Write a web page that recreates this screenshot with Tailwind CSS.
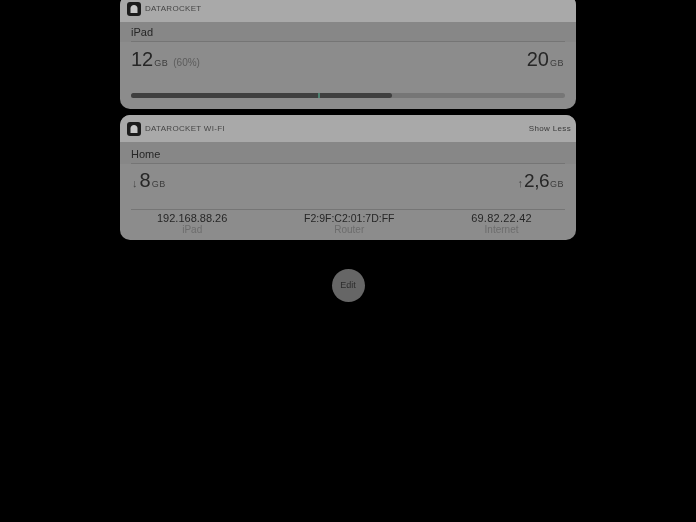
<!DOCTYPE html>
<html lang="en">
<head>
    <meta charset="UTF-8">
    <meta name="viewport" content="width=device-width, initial-scale=1.0">
    <title>DataRocket widgets</title>
    <script src="https://cdn.jsdelivr.net/npm/@tailwindcss/browser@4"></script>
</head>
<body class="bg-black h-[522px] w-[696px] overflow-hidden font-['Liberation_Sans',sans-serif]">
    <div class="flex flex-col items-center">
        <!-- usage widget -->
        <div class="w-[456px] h-[114px] mt-[-5px] rounded-[10px] overflow-hidden bg-[#8c8c8c] flex flex-col">
            <div class="h-[27px] shrink-0 bg-[#a9a9a9] flex items-center pl-[7px] gap-[4px]">
                <svg width="14" height="14" viewBox="0 0 14 14" class="blur-[0.4px]">
                    <rect width="14" height="14" rx="3" fill="#1c1c1c"/>
                    <path d="M3.500 11V6.500C3.500 4.400 5 3 7 3s3.500 1.400 3.500 3.500V11Z" fill="#c8c8c8"/>
                </svg>
                <span class="text-[8px] tracking-[0.3px] text-[#454545] blur-[0.4px]">DATAROCKET</span>
            </div>
            <div class="bg-[#878787] h-[20px] shrink-0 px-[11px]">
                <div class="h-full flex items-end pb-[1px] border-b border-[#757575] text-[11px] text-[#262626] blur-[0.4px]">iPad</div>
            </div>
            <div class="ml-[11px] mr-[12px] mt-[6px] flex justify-between items-baseline text-[#262626] blur-[0.5px]">
                <div class="flex items-baseline">
                    <span class="text-[20px] leading-[23px]">12</span>
                    <span class="text-[9px] tracking-[0.5px] ml-[1px] text-[#3c3c3c]">GB</span>
                    <span class="text-[10px] text-[#5c5c5c] ml-[5px]">(60%)</span>
                </div>
                <div class="flex items-baseline">
                    <span class="text-[20px] leading-[23px]">20</span>
                    <span class="text-[9px] tracking-[0.5px] ml-[1px] text-[#3c3c3c]">GB</span>
                </div>
            </div>
            <div class="relative mx-[11px] mt-[22px] h-[5px] rounded-full bg-[#767676] blur-[0.4px]">
                <div class="h-full w-[261px] rounded-full bg-[#3f3f3f]"></div>
                <div class="absolute left-[187px] top-0 h-full w-[2px] bg-[#4f8070]"></div>
            </div>
        </div>

        <!-- wi-fi widget -->
        <div class="w-[456px] h-[125px] mt-[6px] rounded-[10px] overflow-hidden bg-[#8c8c8c] flex flex-col">
            <div class="h-[27px] shrink-0 bg-[#a9a9a9] flex items-center justify-between pl-[7px] pr-[5px]">
                <div class="flex items-center gap-[4px]">
                    <svg width="14" height="14" viewBox="0 0 14 14" class="blur-[0.4px]">
                        <rect width="14" height="14" rx="3" fill="#1c1c1c"/>
                        <path d="M3.500 11V6.500C3.500 4.400 5 3 7 3s3.500 1.400 3.500 3.500V11Z" fill="#c8c8c8"/>
                    </svg>
                    <span class="text-[8px] tracking-[0.3px] text-[#454545] blur-[0.4px]">DATAROCKET WI-FI</span>
                </div>
                <span class="text-[8px] tracking-[0.35px] text-[#3a3a3a] blur-[0.4px]">Show Less</span>
            </div>
            <div class="bg-[#878787] h-[22px] shrink-0 px-[11px]">
                <div class="h-full flex items-end pb-[1px] border-b border-[#757575] text-[11px] text-[#262626] blur-[0.4px]">Home</div>
            </div>
            <div class="ml-[11px] mr-[12px] mt-[5px] flex justify-between items-baseline text-[#262626] blur-[0.5px]">
                <div class="flex items-baseline">
                    <span class="text-[11px] text-[#454545] ml-[1px] mr-[2px]">↓</span>
                    <span class="text-[20px] leading-[23px]">8</span>
                    <span class="text-[9px] tracking-[0.5px] ml-[1px] text-[#3c3c3c]">GB</span>
                </div>
                <div class="flex items-baseline">
                    <span class="text-[11px] text-[#454545] mr-[1px]">↑</span>
                    <span class="text-[19px] leading-[23px] tracking-[-0.5px]">2,6</span>
                    <span class="text-[9px] tracking-[0.5px] ml-[1px] text-[#3c3c3c]">GB</span>
                </div>
            </div>
            <div class="mx-[11px] mt-[17px] border-t border-[#757575] flex justify-between pl-[26px] pr-[33px] pt-[2px] text-center blur-[0.5px]">
                <div class="flex flex-col">
                    <span class="text-[11px] leading-[12px] text-[#262626]">192.168.88.26</span>
                    <span class="text-[10px] leading-[11px] text-[#6c6c6c]">iPad</span>
                </div>
                <div class="flex flex-col">
                    <span class="text-[10.5px] leading-[12px] text-[#262626]">F2:9F:C2:01:7D:FF</span>
                    <span class="text-[10px] leading-[11px] text-[#6c6c6c]">Router</span>
                </div>
                <div class="flex flex-col">
                    <span class="text-[11px] leading-[12px] tracking-[0.25px] text-[#262626]">69.82.22.42</span>
                    <span class="text-[10px] leading-[11px] text-[#6c6c6c]">Internet</span>
                </div>
            </div>
        </div>

        <button class="mt-[29px] w-[33px] h-[33px] rounded-full bg-[#666666] flex items-center justify-center text-[9px] text-[#2c2c2c]"><span class="blur-[0.5px]">Edit</span></button>
    </div>
</body>
</html>
